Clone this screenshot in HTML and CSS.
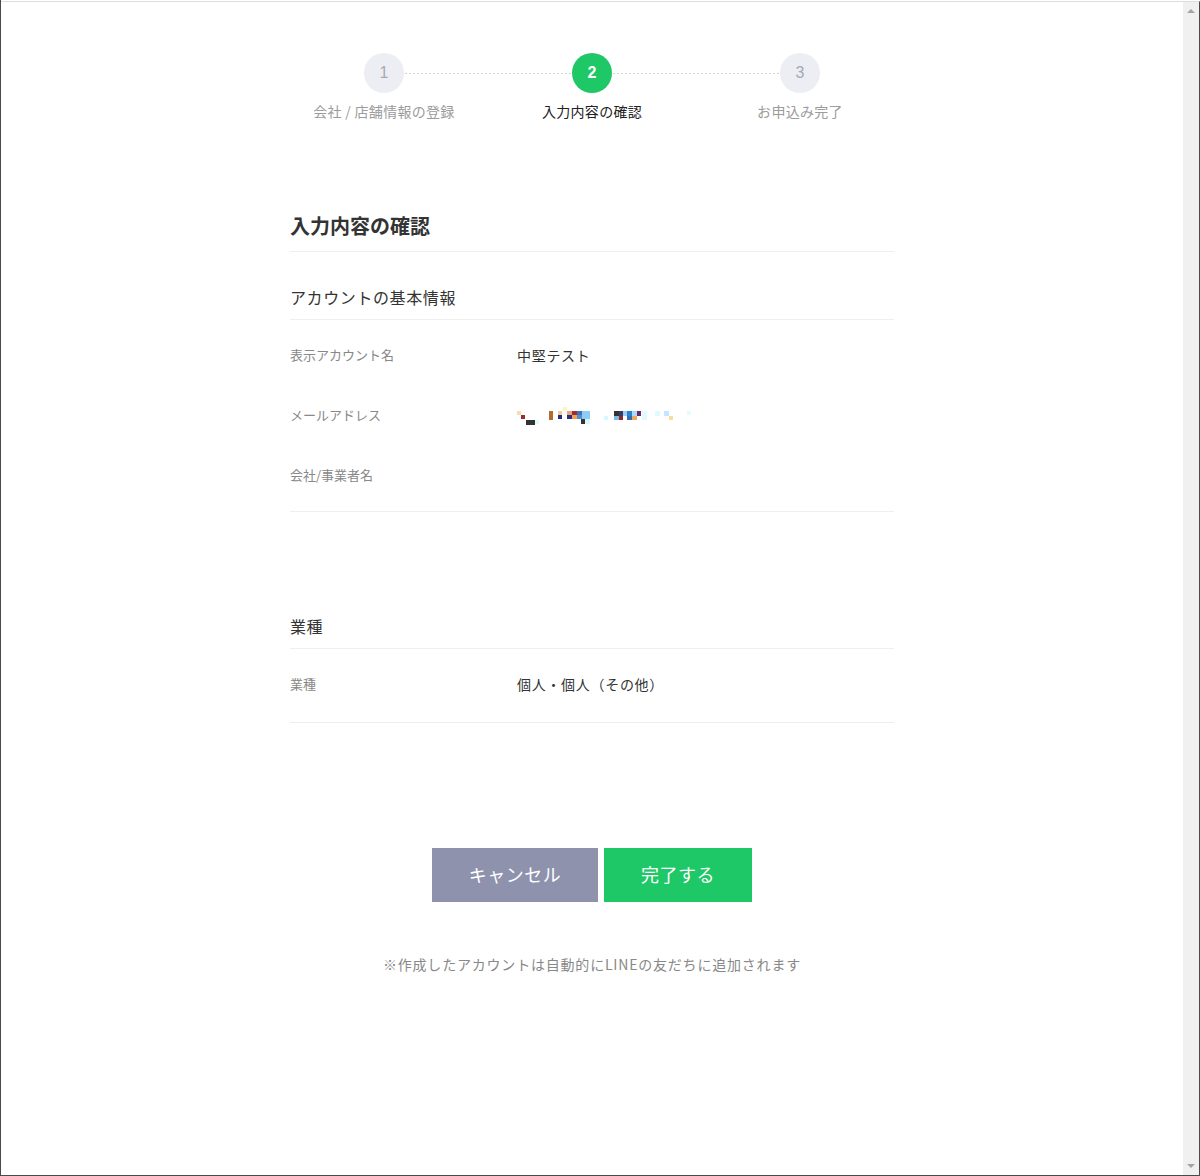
FILE: index.html
```html
<!DOCTYPE html>
<html lang="ja">
<head>
    <meta charset="UTF-8">
    <title>入力内容の確認</title>
    <link rel="stylesheet" href="styles.css">
</head>

<body>
    <div class="window">
        <!-- ページ本体 -->
        <div class="page">

            <!-- ステップ表示 -->
            <ol class="steps">
                <li class="step">
                    <span class="step-num">1</span>
                    <span class="step-label">会社 / 店舗情報の登録</span>
                </li>
                <li class="step current">
                    <span class="step-num">2</span>
                    <span class="step-label">入力内容の確認</span>
                </li>
                <li class="step">
                    <span class="step-num">3</span>
                    <span class="step-label">お申込み完了</span>
                </li>
            </ol>

            <div class="content">
                <h1 class="title">入力内容の確認</h1>

                <!-- アカウントの基本情報 -->
                <section class="section">
                    <h2 class="section-title">アカウントの基本情報</h2>
                    <dl class="rows">
                        <div class="row">
                            <dt>表示アカウント名</dt>
                            <dd>中堅テスト</dd>
                        </div>
                        <div class="row">
                            <dt>メールアドレス</dt>
                            <dd>
                                <svg class="mosaic" width="180" height="20" viewBox="0 0 180 20" shape-rendering="crispEdges">
                                    <rect x="0" y="4" width="4" height="4" fill="#f6dcae"/>
                                    <rect x="4" y="8" width="4" height="4" fill="#9b2c2c"/>
                                    <rect x="9" y="13" width="9" height="5" fill="#333"/>
                                    <rect x="18" y="13" width="4" height="4" fill="#dcfcff"/>
                                    <rect x="32" y="4" width="4" height="9" fill="#b5692a"/>
                                    <rect x="41" y="4" width="4" height="4" fill="#f5c89a"/>
                                    <rect x="41" y="8" width="4" height="4" fill="#2a2a7a"/>
                                    <rect x="46" y="0" width="4" height="4" fill="#fff3c0"/>
                                    <rect x="50" y="4" width="5" height="4" fill="#e8a080"/>
                                    <rect x="50" y="8" width="5" height="4" fill="#2c2c80"/>
                                    <rect x="55" y="4" width="5" height="4" fill="#9a3030"/>
                                    <rect x="55" y="8" width="5" height="4" fill="#f0a050"/>
                                    <rect x="60" y="4" width="5" height="4" fill="#4070c0"/>
                                    <rect x="60" y="8" width="5" height="4" fill="#5090d0"/>
                                    <rect x="65" y="4" width="8" height="8" fill="#8ecbf5"/>
                                    <rect x="64" y="12" width="4" height="5" fill="#333"/>
                                    <rect x="68" y="12" width="5" height="5" fill="#d8f8ff"/>
                                    <rect x="87" y="9" width="4" height="4" fill="#d8f8ff"/>
                                    <rect x="97" y="4" width="5" height="5" fill="#333"/>
                                    <rect x="102" y="4" width="4" height="5" fill="#3a3a6a"/>
                                    <rect x="97" y="9" width="5" height="4" fill="#80b8e8"/>
                                    <rect x="102" y="9" width="4" height="4" fill="#8a2a2a"/>
                                    <rect x="106" y="4" width="4" height="5" fill="#9ad0f5"/>
                                    <rect x="110" y="4" width="5" height="5" fill="#2f7fd0"/>
                                    <rect x="110" y="9" width="5" height="4" fill="#3070b0"/>
                                    <rect x="115" y="4" width="5" height="5" fill="#a8dcf8"/>
                                    <rect x="115" y="9" width="5" height="4" fill="#f0a860"/>
                                    <rect x="120" y="4" width="4" height="5" fill="#6a2a6a"/>
                                    <rect x="125" y="4" width="5" height="9" fill="#e0fbff"/>
                                    <rect x="138" y="4" width="5" height="5" fill="#e0fbff"/>
                                    <rect x="147" y="4" width="5" height="5" fill="#bfe9ff"/>
                                    <rect x="152" y="9" width="4" height="4" fill="#f8dca0"/>
                                    <rect x="170" y="4" width="4" height="4" fill="#e4fcff"/>
                                </svg>
                            </dd>
                        </div>
                        <div class="row">
                            <dt>会社/事業者名</dt>
                            <dd></dd>
                        </div>
                    </dl>
                </section>

                <!-- 業種 -->
                <section class="section section-next">
                    <h2 class="section-title">業種</h2>
                    <dl class="rows">
                        <div class="row">
                            <dt>業種</dt>
                            <dd>個人・個人（その他）</dd>
                        </div>
                    </dl>
                </section>

                <!-- ボタン -->
                <div class="actions">
                    <button class="btn btn-cancel">キャンセル</button>
                    <button class="btn btn-submit">完了する</button>
                </div>

                <p class="note">※作成したアカウントは自動的にLINEの友だちに追加されます</p>
            </div>
        </div>

        <!-- スクロールバー -->
        <div class="scrollbar">
            <span class="arrow arrow-up"></span>
            <span class="arrow arrow-down"></span>
        </div>
    </div>
</body>
</html>
```

FILE: styles.css
```css
/* ページ全体 */
html, body {
    margin: 0;
    padding: 0;
    background: #fff;
}

body {
    font-family: "Noto Sans CJK JP", "Noto Sans", sans-serif;
    color: #333;
}

/* ウィンドウ枠 */
.window {
    display: flex;
    height: 1176px;
    box-sizing: border-box;
    border-left: 1px solid #4a4a4a;
    border-bottom: 1px solid #4a4a4a;
    padding-top: 1px;
}

.page {
    flex: 1;
    border-top: 1px solid #dedede;
}

/* スクロールバー */
.scrollbar {
    width: 16px;
    background: #f0f0f0;
    border-top: 1px solid #dedede;
    border-right: 1px solid #4a4a4a;
    display: flex;
    flex-direction: column;
    justify-content: space-between;
    align-items: center;
    padding: 7px 0 7px;
}

.arrow {
    width: 0;
    height: 0;
    border-left: 4px solid transparent;
    border-right: 4px solid transparent;
}

.arrow-up {
    border-bottom: 4px solid #a3a3a3;
}

.arrow-down {
    border-top: 4px solid #a3a3a3;
}

/* ステップ */
.steps {
    list-style: none;
    margin: 0 auto;
    padding: 51px 0 0;
    width: 624px;
    display: flex;
}

.step {
    width: 208px;
    display: flex;
    flex-direction: column;
    align-items: center;
    position: relative;
}

.step + .step::before {
    content: "";
    position: absolute;
    top: 20px;
    left: -83px;
    width: 166px;
    height: 1px;
    background: linear-gradient(to right, #d4d4d4 50%, transparent 50%);
    background-size: 4px 1px;
}

.step-num {
    width: 40px;
    height: 40px;
    border-radius: 50%;
    background: #eceef3;
    color: #a6a9b4;
    font-family: "Liberation Sans", Arial, sans-serif;
    font-size: 16px;
    display: flex;
    align-items: center;
    justify-content: center;
}

.step-label {
    margin-top: 8px;
    font-size: 14px;
    line-height: 20px;
    letter-spacing: 0.3px;
    color: #9c9c9c;
}

.step.current .step-num {
    background: #1ec866;
    color: #fff;
    font-weight: bold;
}

.step.current .step-label {
    color: #222;
}

/* 本文 */
.content {
    width: 604px;
    margin: 0 auto;
    padding-top: 90px;
}

.title {
    margin: 0;
    font-size: 20px;
    line-height: 28px;
    font-weight: bold;
    color: #333;
    padding: 1px 0 11px;
    border-bottom: 1px solid #eee;
}

.section-title {
    margin: 0;
    padding: 33px 0 10px;
    font-size: 16px;
    line-height: 24px;
    letter-spacing: 0.6px;
    font-weight: normal;
    color: #333;
    border-bottom: 1px solid #eee;
}

.section-next {
    margin-top: 69px;
}

.rows {
    margin: 0;
    padding: 5px 0 6px;
    border-bottom: 1px solid #eee;
}

.section-next .rows {
    padding-bottom: 8px;
}

.row {
    display: flex;
    align-items: center;
    height: 60px;
}

.row dt {
    width: 227px;
    font-size: 13px;
    line-height: 20px;
    color: #888;
}

.row dd {
    margin: 0;
    font-size: 14px;
    line-height: 20px;
    letter-spacing: 0.7px;
    color: #333;
}

.mosaic {
    display: block;
    margin-top: 3px;
}

/* ボタン */
.actions {
    display: flex;
    justify-content: center;
    gap: 6px;
    margin-top: 125px;
}

.btn {
    height: 54px;
    padding: 0 0 3px;
    border: none;
    border-radius: 0;
    color: #fff;
    font-family: "Noto Sans CJK JP", sans-serif;
    font-size: 18px;
    letter-spacing: 0.5px;
    cursor: pointer;
}

.btn-cancel {
    width: 166px;
    background: #8e92ad;
}

.btn-submit {
    width: 148px;
    background: #1ec866;
}

/* 注意書き */
.note {
    margin: 52px 0 0;
    text-align: center;
    font-size: 14px;
    line-height: 20px;
    letter-spacing: 0.8px;
    color: #888;
}
```
